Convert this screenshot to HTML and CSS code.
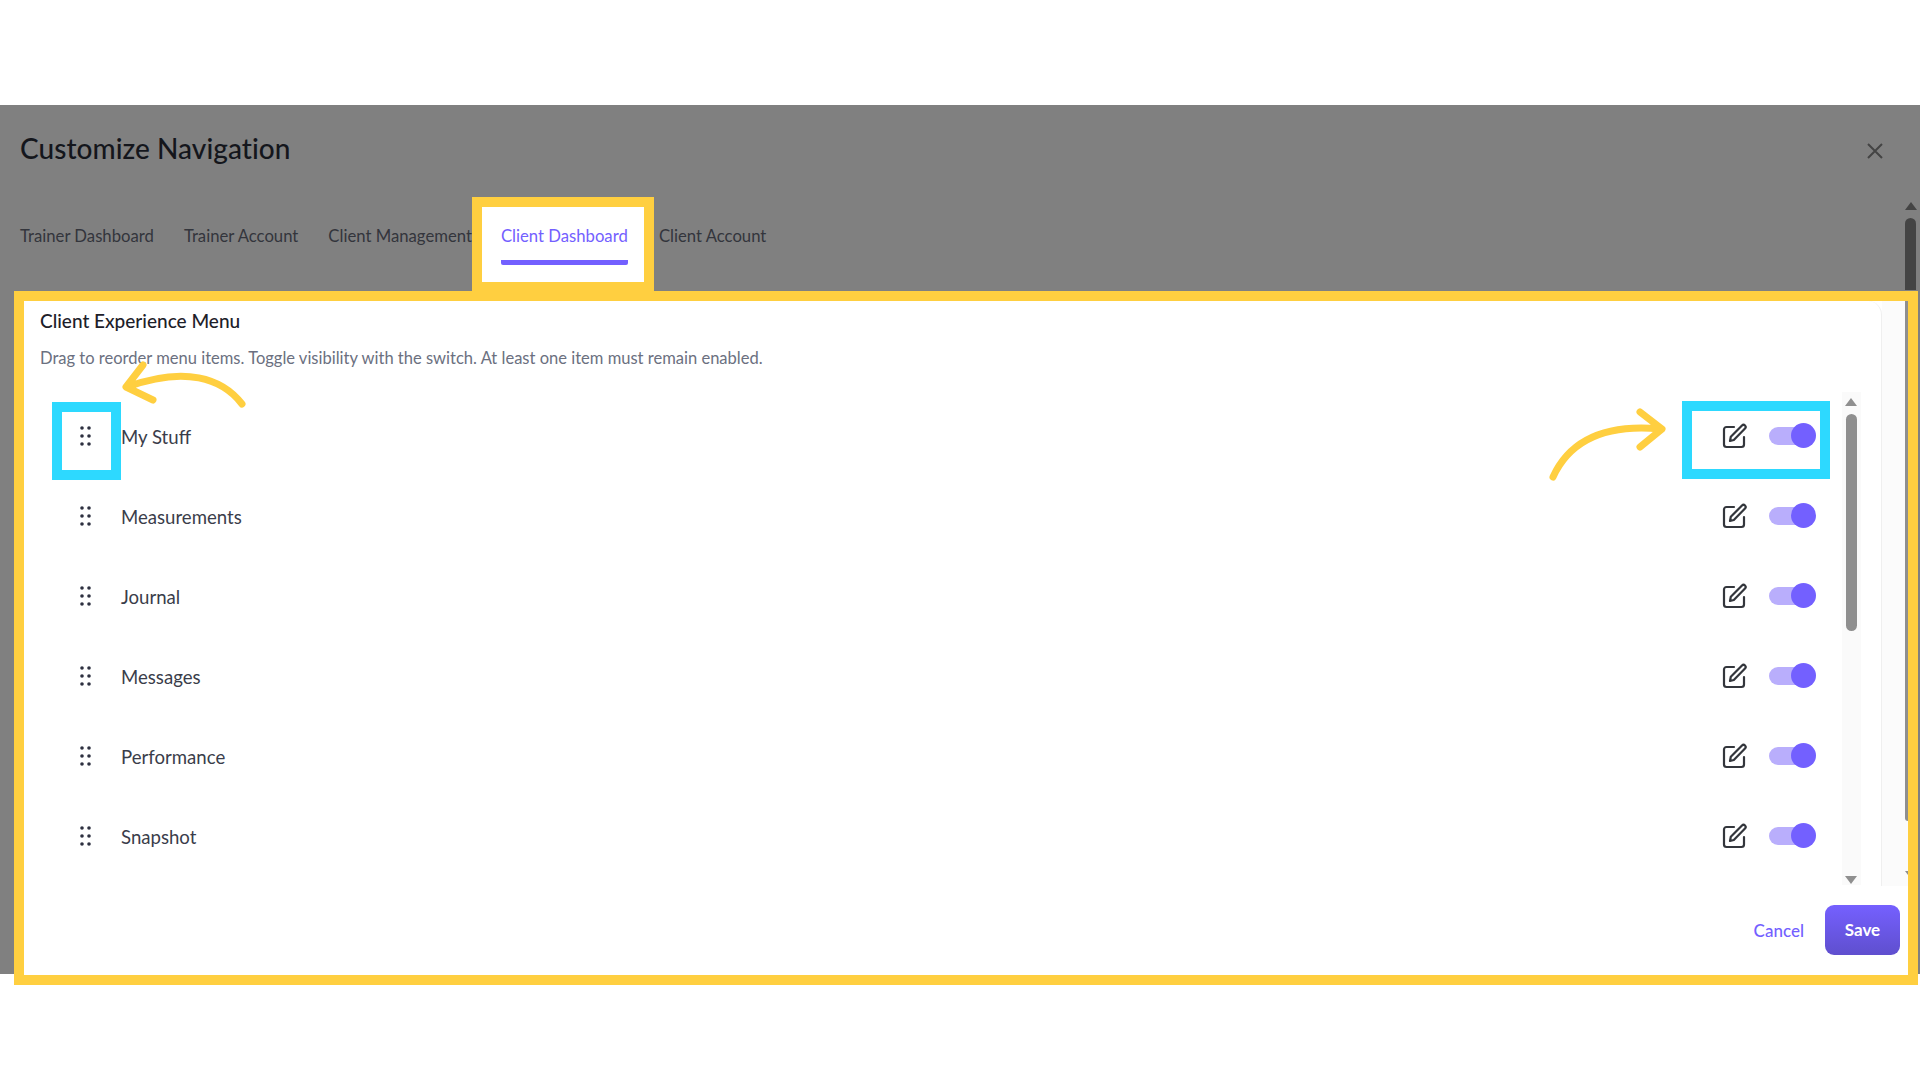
FILE: index.html
```html
<!DOCTYPE html>
<html lang="en">
<head>
  <meta charset="UTF-8">
  <title>Customize Navigation</title>
  <link rel="stylesheet" href="styles.css">
</head>
<body>

  <div class="modal">
    <div class="modal-head">
      <h1>Customize Navigation</h1>
      <svg class="close" width="16" height="16" viewBox="0 0 16 16"><path d="M1 1l14 14M15 1L1 15"/></svg>
    </div>

    <div class="tabs">
      <span class="tab">Trainer Dashboard</span>
      <span class="tab">Trainer Account</span>
      <span class="tab">Client Management</span>
      <span class="tab active"><span class="tab-label">Client Dashboard</span></span>
      <span class="tab">Client Account</span>
    </div>

    <div class="panel">
      <div class="panel-body">
        <div class="card">
          <h2>Client Experience Menu</h2>
          <p class="hint">Drag to reorder menu items. Toggle visibility with the switch. At least one item must remain enabled.</p>
          <div class="list-wrap">
            <ul class="menu-list">
              <li class="menu-row">
                <svg class="grip" width="12" height="20" viewBox="0 0 12 20"><circle cx="2" cy="2" r="1.8"/><circle cx="9" cy="2" r="1.8"/><circle cx="2" cy="10" r="1.8"/><circle cx="9" cy="10" r="1.8"/><circle cx="2" cy="18" r="1.8"/><circle cx="9" cy="18" r="1.8"/></svg>
                <span class="menu-name">My Stuff</span>
                <svg class="edit" width="26" height="26" viewBox="0 0 26 26"><path d="M12 4H4.5A2.5 2.5 0 0 0 2 6.500V21.500A2.500 2.500 0 0 0 4.500 24H19.500A2.500 2.500 0 0 0 22 21.500V14"/><path d="M8 18l.8-4.200L20 2.500a2.100 2.100 0 0 1 3 3L11.800 17z"/></svg>
                <span class="toggle"><span class="knob"></span></span>
              </li>
              <li class="menu-row">
                <svg class="grip" width="12" height="20" viewBox="0 0 12 20"><circle cx="2" cy="2" r="1.8"/><circle cx="9" cy="2" r="1.8"/><circle cx="2" cy="10" r="1.8"/><circle cx="9" cy="10" r="1.8"/><circle cx="2" cy="18" r="1.8"/><circle cx="9" cy="18" r="1.8"/></svg>
                <span class="menu-name">Measurements</span>
                <svg class="edit" width="26" height="26" viewBox="0 0 26 26"><path d="M12 4H4.5A2.5 2.5 0 0 0 2 6.500V21.500A2.500 2.500 0 0 0 4.500 24H19.500A2.500 2.500 0 0 0 22 21.500V14"/><path d="M8 18l.8-4.200L20 2.500a2.100 2.100 0 0 1 3 3L11.800 17z"/></svg>
                <span class="toggle"><span class="knob"></span></span>
              </li>
              <li class="menu-row">
                <svg class="grip" width="12" height="20" viewBox="0 0 12 20"><circle cx="2" cy="2" r="1.8"/><circle cx="9" cy="2" r="1.8"/><circle cx="2" cy="10" r="1.8"/><circle cx="9" cy="10" r="1.8"/><circle cx="2" cy="18" r="1.8"/><circle cx="9" cy="18" r="1.8"/></svg>
                <span class="menu-name">Journal</span>
                <svg class="edit" width="26" height="26" viewBox="0 0 26 26"><path d="M12 4H4.5A2.5 2.5 0 0 0 2 6.500V21.500A2.500 2.500 0 0 0 4.500 24H19.500A2.500 2.500 0 0 0 22 21.500V14"/><path d="M8 18l.8-4.200L20 2.500a2.100 2.100 0 0 1 3 3L11.800 17z"/></svg>
                <span class="toggle"><span class="knob"></span></span>
              </li>
              <li class="menu-row">
                <svg class="grip" width="12" height="20" viewBox="0 0 12 20"><circle cx="2" cy="2" r="1.8"/><circle cx="9" cy="2" r="1.8"/><circle cx="2" cy="10" r="1.8"/><circle cx="9" cy="10" r="1.8"/><circle cx="2" cy="18" r="1.8"/><circle cx="9" cy="18" r="1.8"/></svg>
                <span class="menu-name">Messages</span>
                <svg class="edit" width="26" height="26" viewBox="0 0 26 26"><path d="M12 4H4.5A2.5 2.5 0 0 0 2 6.500V21.500A2.500 2.500 0 0 0 4.500 24H19.500A2.500 2.500 0 0 0 22 21.500V14"/><path d="M8 18l.8-4.200L20 2.500a2.100 2.100 0 0 1 3 3L11.800 17z"/></svg>
                <span class="toggle"><span class="knob"></span></span>
              </li>
              <li class="menu-row">
                <svg class="grip" width="12" height="20" viewBox="0 0 12 20"><circle cx="2" cy="2" r="1.8"/><circle cx="9" cy="2" r="1.8"/><circle cx="2" cy="10" r="1.8"/><circle cx="9" cy="10" r="1.8"/><circle cx="2" cy="18" r="1.8"/><circle cx="9" cy="18" r="1.8"/></svg>
                <span class="menu-name">Performance</span>
                <svg class="edit" width="26" height="26" viewBox="0 0 26 26"><path d="M12 4H4.5A2.5 2.5 0 0 0 2 6.500V21.500A2.500 2.500 0 0 0 4.500 24H19.500A2.500 2.500 0 0 0 22 21.500V14"/><path d="M8 18l.8-4.200L20 2.500a2.100 2.100 0 0 1 3 3L11.800 17z"/></svg>
                <span class="toggle"><span class="knob"></span></span>
              </li>
              <li class="menu-row">
                <svg class="grip" width="12" height="20" viewBox="0 0 12 20"><circle cx="2" cy="2" r="1.8"/><circle cx="9" cy="2" r="1.8"/><circle cx="2" cy="10" r="1.8"/><circle cx="9" cy="10" r="1.8"/><circle cx="2" cy="18" r="1.8"/><circle cx="9" cy="18" r="1.8"/></svg>
                <span class="menu-name">Snapshot</span>
                <svg class="edit" width="26" height="26" viewBox="0 0 26 26"><path d="M12 4H4.5A2.5 2.5 0 0 0 2 6.500V21.500A2.500 2.500 0 0 0 4.500 24H19.500A2.500 2.500 0 0 0 22 21.500V14"/><path d="M8 18l.8-4.200L20 2.500a2.100 2.100 0 0 1 3 3L11.800 17z"/></svg>
                <span class="toggle"><span class="knob"></span></span>
              </li>
            </ul>
            <div class="inner-scroll">
              <span class="arrow-up"></span>
              <span class="inner-thumb"></span>
              <span class="arrow-down"></span>
            </div>
          </div>
        </div>
        <div class="side">
          <span class="side-thumb"></span>
          <span class="side-arrow"></span>
        </div>
      </div>
      <div class="panel-foot">
        <span class="cancel">Cancel</span>
        <span class="save">Save</span>
      </div>
    </div>

    <div class="modal-scroll">
      <span class="arrow-up dark"></span>
      <span class="modal-thumb"></span>
    </div>
  </div>

  <svg class="notes" width="1920" height="1080" viewBox="0 0 1920 1080">
    <rect class="note-box" x="57" y="407" width="59" height="68"/>
    <rect class="note-box" x="1687" y="406" width="138" height="68"/>
    <path class="note-arrow" d="M242 404C222 378 185 366 127 387M143 365L126 387L153 400"/>
    <path class="note-arrow" d="M1553 477C1570 440 1606 424 1660 429M1640 412L1662 429L1640 447"/>
  </svg>

</body>
</html>
```

FILE: styles.css
```css
html, body {
  margin: 0;
  height: 1080px;
  overflow: hidden;
  background: #fff;
}

body {
  position: relative;
  box-sizing: border-box;
  padding-top: 105px;
  font-family: 'Lato', sans-serif;
  color: #2e3140;
}

ul {
  list-style: none;
  margin: 0;
  padding: 0;
}

.modal {
  position: relative;
  height: 869px;
  background: #808080;
}

.modal-head {
  display: flex;
  justify-content: space-between;
  align-items: center;
  height: 86px;
  padding: 0 37px 0 20px;
}

.modal-head h1 {
  margin: 0;
  font-size: 28px;
  font-weight: 500;
  letter-spacing: 0.05px;
  color: #14161c;
}

.close {
  margin-top: 6px;
}

.close path {
  fill: none;
  stroke: #444;
  stroke-width: 2;
}

.tabs {
  display: flex;
  align-items: flex-start;
  height: 94px;
  margin-top: 6px;
  padding-left: 20px;
}

.tab {
  padding-top: 29px;
  margin-right: 30px;
  font-size: 16.7px;
  line-height: 20px;
  color: #33353c;
  white-space: nowrap;
}

.tab.active {
  box-sizing: border-box;
  width: 182px;
  height: 94px;
  margin: 0 5px 0 -30px;
  padding: 19px 0 0 19px;
  border: 10px solid #ffcf40;
  border-bottom-width: 9px;
  background: #fff;
  color: #7360ff;
}

.tab-label {
  display: inline-block;
  width: 127px;
  padding-bottom: 14px;
  border-bottom: 5px solid #7360ff;
  border-radius: 0 0 2px 2px;
}

.panel {
  box-sizing: border-box;
  position: relative;
  width: 1904px;
  height: 694px;
  margin-left: 14px;
  border: 10px solid #ffcf40;
  background: #fff;
}

.panel-body {
  display: flex;
  height: 585px;
}

.card {
  box-sizing: border-box;
  width: 1858px;
  padding: 9px 0 0 16px;
  border-right: 1px solid #efefef;
  border-top-right-radius: 14px;
  background: #fff;
}

.card h2 {
  margin: 0;
  font-size: 19px;
  line-height: 22px;
  font-weight: 500;
  color: #1d2029;
}

.hint {
  margin: 15px 0 0;
  font-size: 16.55px;
  line-height: 22px;
  color: #6b7080;
}

.list-wrap {
  display: flex;
  margin-top: 23px;
}

.menu-list {
  flex: 1;
  padding-top: 4px;
}

.menu-row {
  display: flex;
  align-items: center;
  height: 80px;
  padding-left: 40px;
  padding-right: 27px;
}

.grip {
  flex: none;
  fill: #2e3140;
}

.menu-name {
  flex: 1;
  margin-left: 29px;
  margin-top: 2px;
  font-size: 18.6px;
  color: #3a3d4a;
}

.edit {
  flex: none;
}

.edit path {
  fill: none;
  stroke: #33363c;
  stroke-width: 2.2;
  stroke-linejoin: round;
  stroke-linecap: round;
}

.toggle {
  position: relative;
  flex: none;
  width: 46px;
  height: 18px;
  margin-left: 21px;
  border-radius: 9px;
  background: #b9aefc;
}

.knob {
  position: absolute;
  right: -1px;
  top: -4px;
  width: 25px;
  height: 25px;
  border-radius: 50%;
  background: #7360ff;
}

.inner-scroll {
  position: relative;
  flex: none;
  width: 19px;
  height: 493px;
  margin-right: 20px;
  background: #fafafa;
}

.inner-thumb {
  position: absolute;
  left: 4px;
  top: 22px;
  width: 11px;
  height: 217px;
  border-radius: 6px;
  background: #8f8f8f;
}

.arrow-up, .arrow-down, .side-arrow {
  position: absolute;
  width: 0;
  height: 0;
  border-left: 6px solid transparent;
  border-right: 6px solid transparent;
}

.arrow-up {
  left: 3px;
  top: 6px;
  border-bottom: 8px solid #8f8f8f;
}

.arrow-down {
  left: 3px;
  bottom: 1px;
  border-top: 8px solid #8f8f8f;
}

.side {
  position: relative;
  flex: 1;
  background: #fbfbfb;
  overflow: hidden;
}

.side-thumb {
  display: block;
  width: 3px;
  height: 520px;
  margin-left: auto;
  border-bottom-left-radius: 4px;
  background: #8f8f8f;
}

.side-arrow {
  left: 23px;
  top: 570px;
  border-top: 8px solid #8f8f8f;
}

.panel-foot {
  display: flex;
  justify-content: flex-end;
  align-items: center;
  box-sizing: border-box;
  height: 89px;
  padding: 0 8px 1px 0;
}

.cancel {
  margin-right: 21px;
  font-size: 17px;
  font-weight: 500;
  color: #7360ff;
}

.save {
  box-sizing: border-box;
  width: 75px;
  height: 50px;
  border-radius: 9px;
  background: linear-gradient(#7560ff, #5f4fce);
  color: #fff;
  font-size: 17px;
  font-weight: 700;
  line-height: 50px;
  text-align: center;
}

.modal-scroll {
  position: absolute;
  top: 0;
  right: 0;
  width: 20px;
  height: 185px;
}

.arrow-up.dark {
  left: 5px;
  top: 97px;
  border-bottom-color: #444;
}

.modal-thumb {
  position: absolute;
  left: 5px;
  top: 113px;
  width: 11px;
  height: 72px;
  border-radius: 6px 6px 0 0;
  background: #444;
}

.notes {
  position: absolute;
  left: 0;
  top: 0;
  pointer-events: none;
}

.note-box {
  fill: none;
  stroke: #2dd9ff;
  stroke-width: 10;
}

.note-arrow {
  fill: none;
  stroke: #ffcf40;
  stroke-width: 7;
  stroke-linecap: round;
  stroke-linejoin: round;
}
```
